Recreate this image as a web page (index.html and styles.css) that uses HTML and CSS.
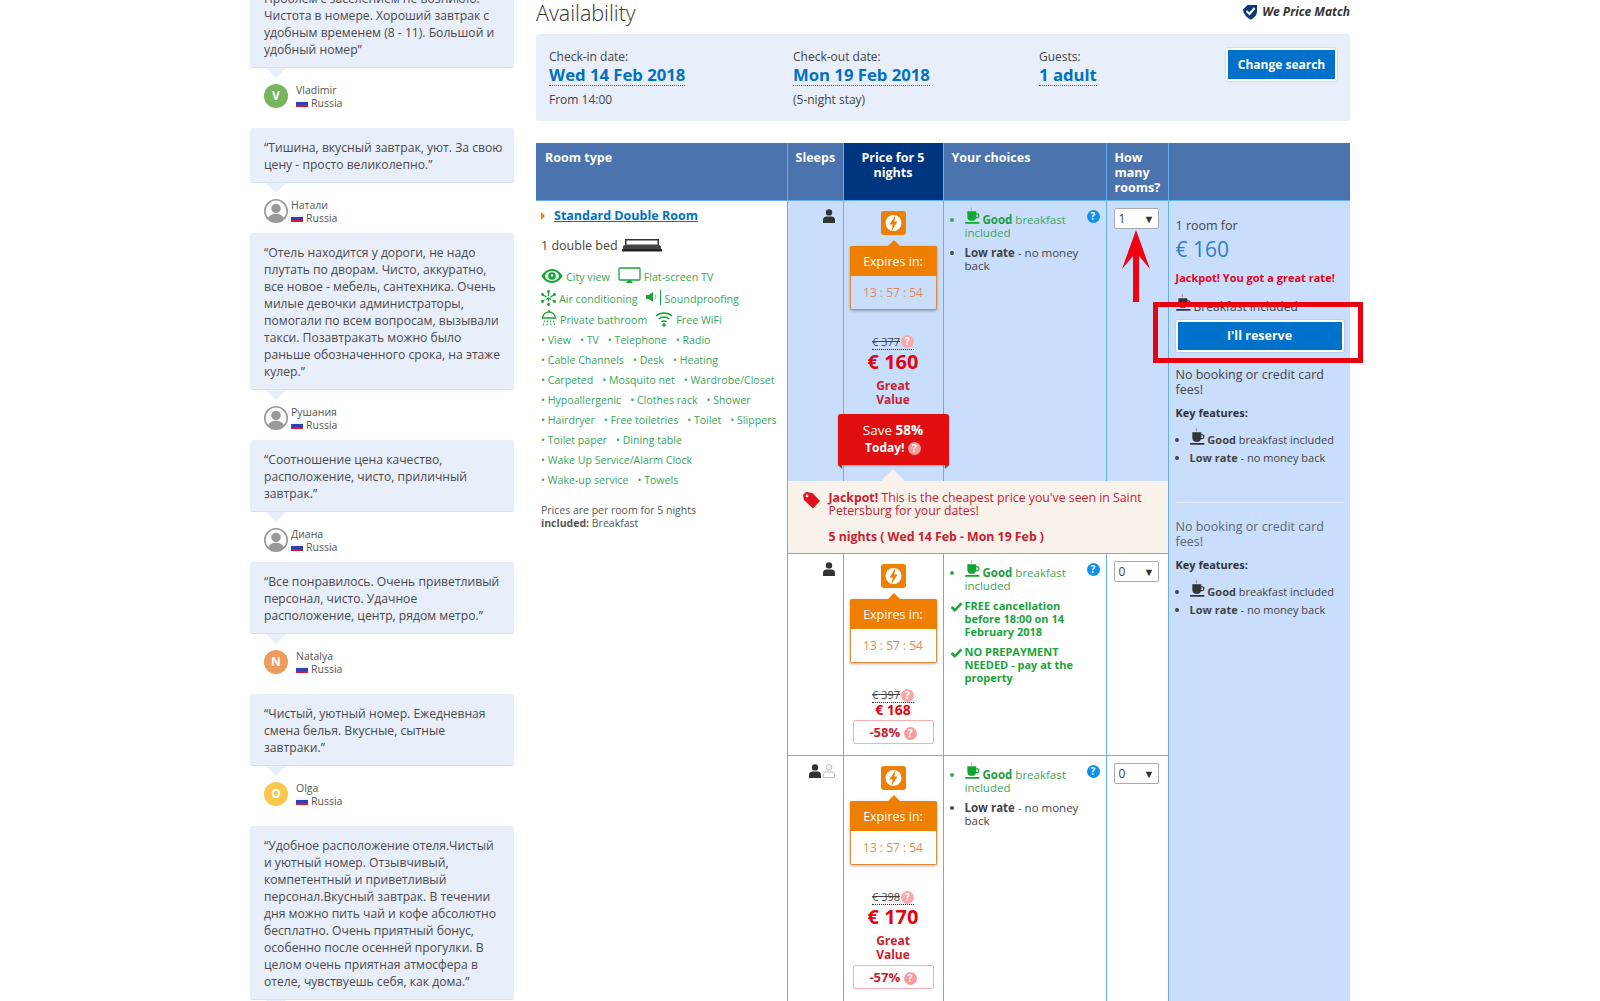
FILE: index.html
```html
<!DOCTYPE html>
<html lang="en">
<head>
    <meta charset="UTF-8">
    <title>Availability</title>
    <link rel="stylesheet" href="styles.css">
</head>
<body>
    <!-- Shared icons -->
    <svg class="icon-defs" width="0" height="0">
        <symbol id="i-person" viewBox="0 0 14 14"><circle cx="7" cy="3.4" r="3.2"/><path d="M1 14v-3.2C1 8.6 3 7.6 4.4 7.6h5.2c1.4 0 3.4 1 3.4 3.2V14z"/></symbol>
        <symbol id="i-person-o" viewBox="0 0 14 14"><circle cx="7" cy="3.4" r="2.8" fill="#fff" stroke="#9aa3ad" stroke-width=".8"/><path d="M1.4 13.6v-2.8c0-2 1.8-2.8 3-2.8h5.2c1.2 0 3 .8 3 2.8v2.8z" fill="#fff" stroke="#9aa3ad" stroke-width=".8"/></symbol>
        <symbol id="i-coffee" viewBox="0 0 16 20"><path d="M7 0c-1 1.6 1 2.4 0 4.400L6.200 4.400C6.800 3 5.400 1.600 7 0z" opacity=".6"/><path d="M2.500 5.500h9.500v2h1.200c1.700 0 2.300 1.200 2.300 2.500s-.8 2.800-2.500 2.800h-1.300c-.4 1.200-1.200 2.200-2.200 2.700H5c-1.700-.8-2.500-2.400-2.500-4.500zM12 8.800v2.800h.9c.8 0 1.300-.6 1.300-1.400s-.4-1.400-1.200-1.400z"/><rect x="0" y="17" width="15.500" height="1.800" rx=".9"/></symbol>
        <symbol id="i-check" viewBox="0 0 14 11"><path d="M1.500 5.500l3.600 3.600L12.500 1.500" fill="none" stroke="#1aa33a" stroke-width="2.800"/></symbol>
        <symbol id="i-bolt" viewBox="0 0 25 24"><rect width="25" height="24" rx="3" fill="#ef7f01"/><circle cx="12.500" cy="12" r="8" fill="#fff"/><path d="M14.500 4l-6 9.500h3.200L10.500 20l6-9.500h-3.200z" fill="#ef7f01"/></symbol>
        <symbol id="i-avatar" viewBox="0 0 24 24"><circle cx="12" cy="12" r="11.200" fill="#fff" stroke="#999" stroke-width="1.600"/><circle cx="12" cy="9.500" r="4.700" fill="#999"/><path d="M3.800 20c1-3.800 4.400-4.600 6.200-5.300h4c1.800.7 5.200 1.500 6.200 5.300-2 2.300-5 3.500-8.200 3.500s-6.200-1.200-8.200-3.500z" fill="#999"/></symbol>
    </svg>

    <div class="page">
        <!-- Reviews column -->
        <div class="reviews">
            <div class="review">
                <p class="review-text">Проблем с заселением не возникло. Чистота в номере. Хороший завтрак с удобным временем (8 - 11). Большой и удобный номер”</p>
                <div class="author tall">
                    <span class="letter green">V</span>
                    <div class="author-info"><span>Vladimir</span><span><i class="flag"></i>Russia</span></div>
                </div>
            </div>
            <div class="review">
                <p class="review-text">“Тишина, вкусный завтрак, уют. За свою цену - просто великолепно.”</p>
                <div class="author">
                    <svg class="avatar"><use href="#i-avatar"/></svg>
                    <div class="author-info"><span>Натали</span><span><i class="flag"></i>Russia</span></div>
                </div>
            </div>
            <div class="review">
                <p class="review-text">“Отель находится у дороги, не надо плутать по дворам. Чисто, аккуратно, все новое - мебель, сантехника. Очень милые девочки администраторы, помогали по всем вопросам, вызывали такси. Позавтракать можно было раньше обозначенного срока, на этаже кулер.”</p>
                <div class="author">
                    <svg class="avatar"><use href="#i-avatar"/></svg>
                    <div class="author-info"><span>Рушания</span><span><i class="flag"></i>Russia</span></div>
                </div>
            </div>
            <div class="review">
                <p class="review-text">“Соотношение цена качество, расположение, чисто, приличный завтрак.”</p>
                <div class="author">
                    <svg class="avatar"><use href="#i-avatar"/></svg>
                    <div class="author-info"><span>Диана</span><span><i class="flag"></i>Russia</span></div>
                </div>
            </div>
            <div class="review">
                <p class="review-text">“Все понравилось. Очень приветливый персонал, чисто. Удачное расположение, центр, рядом метро.”</p>
                <div class="author tall">
                    <span class="letter orange">N</span>
                    <div class="author-info"><span>Natalya</span><span><i class="flag"></i>Russia</span></div>
                </div>
            </div>
            <div class="review">
                <p class="review-text">“Чистый, уютный номер. Ежедневная смена белья. Вкусные, сытные завтраки.”</p>
                <div class="author tall">
                    <span class="letter yellow">O</span>
                    <div class="author-info"><span>Olga</span><span><i class="flag"></i>Russia</span></div>
                </div>
            </div>
            <div class="review">
                <p class="review-text">“Удобное расположение отеля.Чистый и уютный номер. Отзывчивый, компетентный и приветливый персонал.Вкусный завтрак. В течении дня можно пить чай и кофе абсолютно бесплатно. Очень приятный бонус, особенно после осенней прогулки. В целом очень приятная атмосфера в отеле, чувствуешь себя, как дома.”</p>
            </div>
        </div>

        <!-- Availability column -->
        <div class="main">
            <div class="title-row">
                <h2>Availability</h2>
                <div class="price-match">
                    <svg width="16" height="16" viewBox="0 0 16 16"><path d="M1 5.500L5.500 1h9.500v6.500C15 11.500 11 15 8.500 15.500 5 14 1 9.500 1 5.500z" fill="#0b3a7a"/><path d="M4.500 7l3 3 5-6" fill="none" stroke="#fff" stroke-width="2"/></svg>
                    <span>We Price Match</span>
                </div>
            </div>

            <div class="search-box">
                <div class="search-col">
                    <span>Check-in date:</span>
                    <a class="search-value">Wed 14 Feb 2018</a>
                    <span>From 14:00</span>
                </div>
                <div class="search-col wide">
                    <span>Check-out date:</span>
                    <a class="search-value">Mon 19 Feb 2018</a>
                    <span>(5-night stay)</span>
                </div>
                <div class="search-col guests">
                    <span>Guests:</span>
                    <a class="search-value">1 adult</a>
                </div>
                <button class="blue-btn change-btn">Change search</button>
            </div>

            <table class="rooms">
                <colgroup>
                    <col class="c-type"><col class="c-sleeps"><col class="c-price"><col class="c-choices"><col class="c-count"><col class="c-side">
                </colgroup>
                <thead>
                    <tr>
                        <th>Room type</th>
                        <th>Sleeps</th>
                        <th class="th-price">Price for 5 nights</th>
                        <th>Your choices</th>
                        <th>How many rooms?</th>
                        <th></th>
                    </tr>
                </thead>
                <tbody>
                    <tr class="selected">
                        <td class="type-cell" rowspan="4">
                            <a class="room-name">Standard Double Room</a>
                            <div class="bed-line">1 double bed
                                <svg width="40" height="15" viewBox="0 0 40 15"><path d="M3 1h34v6h-1.500V2.500h-31V7H3z" fill="#333"/><path d="M1 8l3-1.500h32L39 8v4H1z" fill="#444"/><rect y="11" width="40" height="2.500" fill="#222"/></svg>
                            </div>
                            <div class="fac-icons first">
                                <span>
                                    <svg width="22" height="16" viewBox="0 0 22 16"><path d="M11 1C5.500 1 2 5 .5 8 2 11 5.500 15 11 15s9-4 10.500-7C20 5 16.500 1 11 1z" fill="#1aa33a"/><ellipse cx="11" cy="8" rx="7" ry="5" fill="#e8f5ea"/><circle cx="11" cy="8" r="3.800" fill="#1aa33a"/><circle cx="11" cy="7.500" r="1.200" fill="#fff"/></svg>
                                    City view
                                </span>
                                <span>
                                    <svg width="23" height="17" viewBox="0 0 23 17"><rect x="1" y="1" width="21" height="12" rx="1" fill="none" stroke="#1aa33a" stroke-width="1.300"/><path d="M8 16l2.500-3h2l2.500 3z" fill="#1aa33a"/></svg>
                                    Flat-screen TV
                                </span>
                            </div>
                            <div class="fac-icons">
                                <span>
                                    <svg width="15" height="16" viewBox="0 0 15 16" fill="#1aa33a" stroke="#1aa33a" stroke-width="1.300"><path d="M7.500 2v12M2 5l11 6M13 5L2 11" stroke-dasharray="4 1.500"/><circle cx="7.500" cy="1.500" r=".8"/><circle cx="7.500" cy="14.500" r=".8"/><circle cx="1.500" cy="4.500" r=".8"/><circle cx="13.500" cy="4.500" r=".8"/><circle cx="1.500" cy="11.500" r=".8"/><circle cx="13.500" cy="11.500" r=".8"/></svg>
                                    Air conditioning
                                </span>
                                <span>
                                    <svg width="16" height="16" viewBox="0 0 16 16"><path d="M0 5h3l4-3v10L3 9H0z" fill="#1aa33a"/><path d="M9 4.500c1 1.500 1 3.500 0 5" fill="none" stroke="#7fc48f"/><rect x="14" width="1" height="15" fill="#1aa33a"/></svg>
                                    Soundproofing
                                </span>
                            </div>
                            <div class="fac-icons">
                                <span>
                                    <svg width="16" height="17" viewBox="0 0 16 17" fill="none" stroke="#1aa33a"><path d="M8 0v2" stroke-width="1.500"/><path d="M1.500 8C2 4 5 2 8 2s6 2 6.500 6z" stroke-width="1.500"/><path d="M3.500 10.500L2 16M6.500 10.500L6 16M9.500 10.500l.5 5.500M12.500 10.500L14 16" stroke-dasharray="2 1"/></svg>
                                    Private bathroom
                                </span>
                                <span>
                                    <svg width="18" height="16" viewBox="0 0 18 16" fill="none" stroke="#1aa33a" stroke-width="1.600"><path d="M1 5c4.500-4 11.500-4 16 0M3.800 8c3-2.600 7.400-2.600 10.400 0M6.500 11c1.500-1.200 3.500-1.200 5 0"/><circle cx="9" cy="14" r="1" fill="#1aa33a"/></svg>
                                    Free WiFi
                                </span>
                            </div>
                            <div class="fac-list">
                                <div><span>View</span><span>TV</span><span>Telephone</span><span>Radio</span></div>
                                <div><span>Cable Channels</span><span>Desk</span><span>Heating</span></div>
                                <div><span>Carpeted</span><span>Mosquito net</span><span>Wardrobe/Closet</span></div>
                                <div><span>Hypoallergenic</span><span>Clothes rack</span><span>Shower</span></div>
                                <div><span>Hairdryer</span><span>Free toiletries</span><span>Toilet</span><span>Slippers</span></div>
                                <div><span>Toilet paper</span><span>Dining table</span></div>
                                <div><span>Wake Up Service/Alarm Clock</span></div>
                                <div><span>Wake-up service</span><span>Towels</span></div>
                            </div>
                            <p class="per-room">Prices are per room for 5 nights<br><b>included:</b> Breakfast</p>
                        </td>
                        <td class="sleeps"><svg class="person"><use href="#i-person"/></svg></td>
                        <td class="price-cell">
                            <svg class="bolt"><use href="#i-bolt"/></svg>
                            <div class="expires"><div class="expires-head">Expires in:</div><div class="expires-time">13 : 57 : 54</div></div>
                            <div class="old-price"><s>€ 377</s><i class="help pink">?</i></div>
                            <div class="new-price">€ 160</div>
                            <div class="great">Great<br>Value</div>
                            <div class="save-box">Save <b>58%</b><br><b class="today">Today!</b> <i class="help pink-solid">?</i></div>
                            <div class="notch"></div>
                        </td>
                        <td class="choices">
                            <i class="help blue">?</i>
                            <ul>
                                <li class="good"><svg class="coffee"><use href="#i-coffee"/></svg> <b>Good</b> breakfast included</li>
                                <li class="plain"><b>Low rate</b> - no money back</li>
                            </ul>
                        </td>
                        <td class="count"><div class="fake-select">1<span>▼</span></div></td>
                        <td class="side" rowspan="4">
                            <div class="side-for">1 room for</div>
                            <div class="side-price">€ 160</div>
                            <div class="side-jackpot">Jackpot! You got a great rate!</div>
                            <div class="side-breakfast"><svg class="coffee"><use href="#i-coffee"/></svg> Breakfast included</div>
                            <button class="blue-btn reserve-btn">I'll reserve</button>
                            <p class="no-fees">No booking or credit card fees!</p>
                            <h4>Key features:</h4>
                            <ul class="key-list">
                                <li><svg class="coffee"><use href="#i-coffee"/></svg> <b>Good</b> breakfast included</li>
                                <li><b>Low rate</b> - no money back</li>
                            </ul>
                            <hr>
                            <p class="no-fees dim">No booking or credit card fees!</p>
                            <h4>Key features:</h4>
                            <ul class="key-list">
                                <li><svg class="coffee"><use href="#i-coffee"/></svg> <b>Good</b> breakfast included</li>
                                <li><b>Low rate</b> - no money back</li>
                            </ul>
                        </td>
                    </tr>
                    <tr>
                        <td class="jackpot" colspan="4">
                            <svg class="tag" width="17" height="17" viewBox="0 0 17 17"><path d="M0 3l3-3 6.500 1L17 9l-7 7.500L1 8z" fill="#e0101c"/><circle cx="4" cy="4" r="1.400" fill="#fff"/></svg>
                            <div>
                                <p><b>Jackpot!</b> This is the cheapest price you've seen in Saint Petersburg for your dates!</p>
                                <p class="jackpot-dates">5 nights ( Wed 14 Feb - Mon 19 Feb )</p>
                            </div>
                        </td>
                    </tr>
                    <tr>
                        <td class="sleeps"><svg class="person"><use href="#i-person"/></svg></td>
                        <td class="price-cell">
                            <svg class="bolt"><use href="#i-bolt"/></svg>
                            <div class="expires"><div class="expires-head">Expires in:</div><div class="expires-time">13 : 57 : 54</div></div>
                            <div class="old-price"><s>€ 397</s><i class="help pink">?</i></div>
                            <div class="new-price small">€ 168</div>
                            <div class="pct-box">-58% <i class="help pink-solid">?</i></div>
                        </td>
                        <td class="choices">
                            <i class="help blue">?</i>
                            <ul>
                                <li class="good"><svg class="coffee"><use href="#i-coffee"/></svg> <b>Good</b> breakfast included</li>
                                <li class="free"><svg class="tick"><use href="#i-check"/></svg>FREE cancellation before 18:00 on 14 February 2018</li>
                                <li class="free"><svg class="tick"><use href="#i-check"/></svg>NO PREPAYMENT NEEDED - pay at the property</li>
                            </ul>
                        </td>
                        <td class="count"><div class="fake-select">0<span>▼</span></div></td>
                    </tr>
                    <tr>
                        <td class="sleeps"><svg class="person"><use href="#i-person"/></svg><svg class="person outline"><use href="#i-person-o"/></svg></td>
                        <td class="price-cell">
                            <svg class="bolt"><use href="#i-bolt"/></svg>
                            <div class="expires"><div class="expires-head">Expires in:</div><div class="expires-time">13 : 57 : 54</div></div>
                            <div class="old-price"><s>€ 398</s><i class="help pink">?</i></div>
                            <div class="new-price">€ 170</div>
                            <div class="great">Great<br>Value</div>
                            <div class="pct-box tight">-57% <i class="help pink-solid">?</i></div>
                        </td>
                        <td class="choices">
                            <i class="help blue">?</i>
                            <ul>
                                <li class="good"><svg class="coffee"><use href="#i-coffee"/></svg> <b>Good</b> breakfast included</li>
                                <li class="plain"><b>Low rate</b> - no money back</li>
                            </ul>
                        </td>
                        <td class="count"><div class="fake-select">0<span>▼</span></div></td>
                    </tr>
                </tbody>
            </table>
        </div>

        <!-- Red annotations drawn over the screenshot -->
        <svg class="note-arrow" width="30" height="72" viewBox="0 0 30 72"><path d="M15 0l14 39-11-13v46h-6V26L1 39z" fill="#f00010"/></svg>
        <div class="note-box"></div>
    </div>
</body>
</html>
```

FILE: styles.css
```css
html, body {
    margin: 0;
    padding: 0;
    height: 1001px;
    overflow: hidden;
    background: #fff;
}
body {
    font-family: "Open Sans", "Noto Sans", sans-serif;
    color: #444;
}
.icon-defs {
    position: absolute;
}
p {
    margin: 0;
}
.page {
    position: relative;
    display: flex;
    gap: 22px;
    width: 1100px;
    margin-left: 250px;
}

/* Reviews */
.reviews {
    width: 264px;
    flex: none;
    margin-top: -21px;
}
.review-text {
    position: relative;
    margin: 0;
    padding: 11px 11px 9px 14px;
    font-size: 12.15px;
    line-height: 17px;
    color: #4a4a4a;
    background: #e8eefa;
    border-bottom: 1px solid #cfe0f5;
    border-radius: 3px;
}
.review-text::after {
    content: "";
    position: absolute;
    left: 16px;
    bottom: -11px;
    border-left: 10px solid transparent;
    border-right: 10px solid transparent;
    border-top: 10px solid #e8eefa;
}
.author {
    display: flex;
    align-items: flex-start;
    gap: 3px;
    height: 50px;
    padding: 16px 0 0 14px;
    box-sizing: border-box;
}
.author.tall {
    height: 60px;
    gap: 8px;
}
.avatar, .letter {
    width: 24px;
    height: 24px;
    flex: none;
}
.letter {
    border-radius: 50%;
    color: #fff;
    font-size: 12px;
    font-weight: 700;
    line-height: 24px;
    text-align: center;
}
.letter.green { background: #77b55f; }
.letter.orange { background: #ee9a5c; }
.letter.yellow { background: #fcc74f; }
.author-info {
    display: flex;
    flex-direction: column;
    font-size: 10.5px;
    line-height: 13px;
    color: #555;
}
.flag {
    display: inline-block;
    width: 12px;
    height: 7px;
    margin-right: 3px;
    background: linear-gradient(#f4f4f8 33%, #2f3fb8 33%, #2f3fb8 66%, #d8182c 66%);
}

/* Main column */
.main {
    width: 814px;
    flex: none;
}
.title-row {
    display: flex;
    justify-content: space-between;
    height: 34px;
}
h2 {
    margin: 0;
    font-size: 21.5px;
    font-weight: 300;
    line-height: 26px;
    color: #333;
}
.price-match {
    display: flex;
    align-items: flex-start;
    gap: 4px;
    padding-top: 4px;
    font-size: 12px;
    font-weight: 700;
    font-style: italic;
    line-height: 16px;
    color: #333;
}
.search-box {
    display: flex;
    height: 87px;
    box-sizing: border-box;
    padding: 14px 13px 0;
    background: #e8eefa;
    border-radius: 3px;
}
.search-col {
    display: flex;
    flex-direction: column;
    align-items: flex-start;
    width: 244px;
    font-size: 12px;
    line-height: 17px;
    color: #444;
}
.search-col.wide {
    width: 246px;
}
.search-col.guests {
    width: auto;
}
.search-value {
    margin-top: -1px;
    margin-bottom: 5px;
    font-size: 16.7px;
    font-weight: 700;
    line-height: 21px;
    color: #0071c2;
    border-bottom: 1px dotted #0071c2;
}
.blue-btn {
    border: 2px solid #fff;
    border-radius: 2px;
    background: #0071cb;
    color: #fff;
    font-family: inherit;
    font-size: 12.5px;
    font-weight: 700;
    box-shadow: 0 0 2px rgba(0, 0, 0, .25);
}
.change-btn {
    width: 111px;
    height: 33px;
    margin-left: auto;
    padding: 0;
    font-size: 12px;
}

/* Rooms table */
.rooms {
    width: 814px;
    margin-top: 22px;
    table-layout: fixed;
    border-collapse: collapse;
    font-size: 12px;
}
.c-type { width: 251px; }
.c-sleeps { width: 56px; }
.c-price { width: 100px; }
.c-choices { width: 163px; }
.c-count { width: 62px; }
.c-side { width: 182px; }
.rooms th {
    height: 57px;
    box-sizing: border-box;
    padding: 7px 8px 0;
    vertical-align: top;
    text-align: left;
    font-size: 12.5px;
    line-height: 15px;
    color: #fff;
    background: #4b74ae;
    border-right: 1px solid #66aef0;
    border-bottom: 1px solid #66aef0;
}
.rooms th:first-child {
    padding-left: 9px;
}
.rooms th:last-child {
    border-right: 0;
}
.rooms .th-price {
    text-align: center;
    background: #003580;
}
.rooms td {
    padding: 0;
    vertical-align: top;
    border: 1px solid #66aef0;
}
.selected td {
    background: #c9defc;
    border-bottom: 0;
}
.rooms .type-cell {
    padding: 6px 0 0 5px;
    background: #fff;
    border-left: 0;
    border-bottom: 0;
}
.room-name {
    position: relative;
    display: inline-block;
    margin-left: 13px;
    font-size: 12.5px;
    font-weight: 700;
    color: #0071c2;
    text-decoration: underline;
}
.room-name::before {
    content: "";
    position: absolute;
    left: -13px;
    top: 5px;
    border-left: 4px solid #ef7f01;
    border-top: 4px solid transparent;
    border-bottom: 4px solid transparent;
}
.bed-line {
    display: flex;
    align-items: center;
    gap: 4px;
    margin-top: 13px;
    height: 18px;
    font-size: 12.5px;
    color: #444;
}
.fac-icons {
    display: flex;
    align-items: flex-end;
    gap: 8px;
    height: 21.5px;
    font-size: 10.7px;
    color: #3ba65a;
}
.fac-icons.first {
    margin-top: 8px;
}
.fac-icons span {
    display: flex;
    align-items: flex-end;
    gap: 3px;
}
.fac-list {
    margin-top: 3px;
    font-size: 10.6px;
    color: #3ba65a;
}
.fac-list div {
    display: flex;
    gap: 9px;
    height: 20px;
    line-height: 20px;
    white-space: nowrap;
}
.fac-list span::before {
    content: "• ";
}
.per-room {
    margin-top: 14px;
    font-size: 10.5px;
    line-height: 13px;
    color: #555;
}
.sleeps {
    padding: 8px 7px 0 0 !important;
    text-align: right;
    line-height: 0;
}
.person {
    width: 14px;
    height: 14px;
    fill: #333;
}
.price-cell {
    padding: 10px 0 0 !important;
    text-align: center;
}
.bolt {
    display: block;
    width: 25px;
    height: 24px;
    margin: 0 auto;
}
.expires {
    position: relative;
    width: 87px;
    margin: 11px auto 0;
    box-sizing: border-box;
    border: 1px solid #e08a3c;
    border-top: 0;
    border-radius: 2px;
    box-shadow: 0 1px 3px rgba(0, 0, 0, .3);
}
.expires::before {
    content: "";
    position: absolute;
    left: 37px;
    top: -6px;
    border-left: 6px solid transparent;
    border-right: 6px solid transparent;
    border-bottom: 6px solid #ef7f01;
}
.expires-head {
    margin: 0 -1px;
    height: 30px;
    font-size: 12.5px;
    line-height: 32px;
    color: #fff;
    background: #ef7f01;
    border-radius: 2px 2px 0 0;
}
.expires-time {
    height: 33px;
    font-size: 12px;
    line-height: 33px;
    color: #e08a55;
    background: #fff;
}
.selected .expires-time {
    background: transparent;
}
.old-price {
    display: inline-flex;
    align-items: center;
    gap: 1px;
    height: 14px;
    margin-top: 25px;
    font-size: 11px;
    line-height: 14px;
    border-bottom: 1px dotted #003580;
}
.new-price {
    font-size: 20px;
    font-weight: 700;
    line-height: 23px;
    color: #e0060f;
}
.new-price.small {
    font-size: 14px;
    line-height: 14px;
}
.great {
    margin-top: 6px;
    font-size: 12px;
    font-weight: 700;
    line-height: 14px;
    color: #c8202f;
}
.save-box {
    position: relative;
    z-index: 1;
    margin: 7px -6px 0;
    height: 51px;
    box-sizing: border-box;
    padding-top: 8px;
    font-size: 13.5px;
    line-height: 17px;
    color: #fff;
    background: #e10f0f;
    border-radius: 3px 3px 0 0;
    box-shadow: 0 1px 2px rgba(0, 0, 0, .3);
}
.save-box::before, .save-box::after {
    content: "";
    position: absolute;
    bottom: -4px;
    border-top: 4px solid #7a4a20;
}
.save-box::before {
    left: 0;
    border-left: 4px solid transparent;
}
.save-box::after {
    right: 0;
    border-right: 4px solid transparent;
}
.today {
    font-size: 12px;
}
.notch {
    width: 0;
    margin: 4px auto 0;
    border-left: 12px solid transparent;
    border-right: 12px solid transparent;
    border-bottom: 12px solid #f9f2eb;
}
.help {
    display: inline-block;
    width: 13px;
    height: 13px;
    border-radius: 50%;
    font-size: 10px;
    font-style: normal;
    font-weight: 700;
    line-height: 13px;
    text-align: center;
    color: #fff;
}
.help.pink { background: #f8a8a8; }
.help.pink-solid { background: #f89aa0; }
.help.blue { background: #1090ee; }
.pct-box {
    width: 79px;
    height: 22px;
    margin: 3px auto 11px;
    border: 1px solid #f0b0b4;
    border-radius: 2px;
    font-size: 13px;
    font-weight: 700;
    line-height: 22px;
    color: #c8202f;
    background: #fff;
}
.pct-box.tight {
    margin: 3px auto 40px;
}
.choices {
    position: relative;
}
.choices .help {
    position: absolute;
    right: 6px;
    top: 9px;
}
.choices ul {
    margin: 0;
    padding: 5px 10px 0 21px;
    font-size: 11.5px;
    line-height: 13px;
}
.choices li {
    margin-bottom: 7px;
}
.coffee {
    width: 15px;
    height: 19px;
    vertical-align: -1px;
}
.good {
    color: #3ba65a;
}
.good b {
    color: #1f9a45;
}
.good .coffee {
    fill: #0fa62e;
}
.plain {
    color: #444;
}
.free {
    position: relative;
    list-style: none;
    font-size: 11px;
    font-weight: 700;
    color: #1aa33a;
}
.tick {
    position: absolute;
    left: -15px;
    top: 3px;
    width: 13px;
    height: 10px;
}
.count {
    padding: 7px 0 0 7px !important;
}
.fake-select {
    display: flex;
    justify-content: space-between;
    width: 45px;
    height: 21px;
    box-sizing: border-box;
    padding: 0 3px 0 4px;
    font-size: 12px;
    line-height: 20px;
    color: #444;
    background: #fff;
    border: 1px solid #aaa;
    border-radius: 2px;
}
.fake-select span {
    font-size: 11px;
    color: #333;
}
.rooms .jackpot {
    position: relative;
    height: 73px;
    box-sizing: border-box;
    padding: 10px 15px 0 41px;
    font-size: 12.3px;
    line-height: 13px;
    color: #c8202f;
    background: #f9f2eb;
    border-top: 0;
}
.tag {
    position: absolute;
    left: 15px;
    top: 11px;
}
.jackpot-dates {
    margin-top: 13px;
    font-weight: 700;
}
.rooms .side {
    padding: 16px 6px 0 7px;
    background: #c9defc;
    border-right: 0;
    border-bottom: 0;
    color: #444;
}
.side-for {
    font-size: 12.5px;
    line-height: 18px;
}
.side-price {
    font-size: 21px;
    line-height: 29px;
    color: #2a7fc9;
}
.side-jackpot {
    margin-top: 6px;
    font-size: 11px;
    font-weight: 700;
    line-height: 15px;
    color: #e8001c;
}
.side-breakfast {
    height: 21px;
    margin-top: 8px;
    font-size: 12px;
    line-height: 21px;
}
.side-breakfast .coffee {
    fill: #333;
}
.reserve-btn {
    display: block;
    width: 168px;
    height: 32px;
    margin-top: 6px;
    padding: 0;
}
.no-fees {
    margin-top: 15px;
    font-size: 12.5px;
    line-height: 15px;
}
.no-fees.dim {
    color: #5c6670;
}
.side h4 {
    margin: 8px 0 0;
    font-size: 11px;
    line-height: 15px;
    color: #333;
}
.key-list {
    margin: 7px 0 0;
    padding-left: 14px;
    font-size: 11px;
    line-height: 18px;
}
.key-list .coffee {
    fill: #333;
    vertical-align: -2px;
}
.side hr {
    margin: 35px 0 0;
    height: 1px;
    border: 0;
    background: #e8eefa;
}
.side hr + .no-fees {
    margin-top: 16px;
}

/* Annotations */
.note-arrow {
    position: absolute;
    left: 871px;
    top: 230px;
}
.note-box {
    position: absolute;
    left: 903px;
    top: 302px;
    width: 200px;
    height: 51px;
    border: 5px solid #e8000f;
}
```
